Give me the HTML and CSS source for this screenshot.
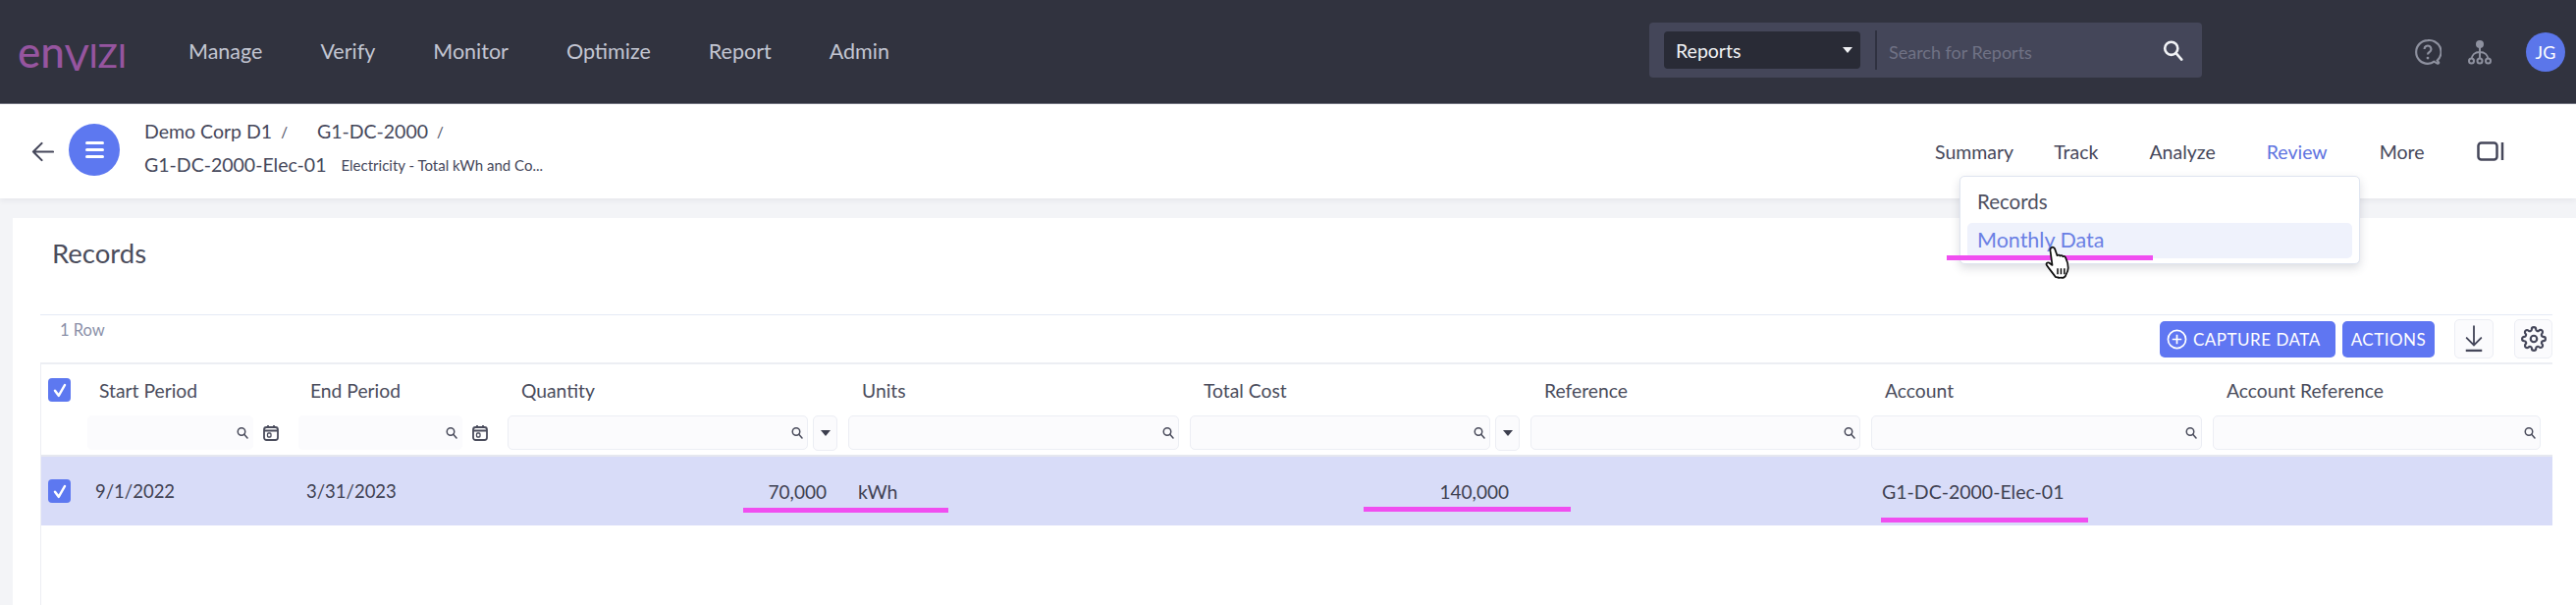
FILE: index.html
```html
<!DOCTYPE html>
<html lang="en">
<head>
    <meta charset="UTF-8">
    <title>Envizi - Monthly Data</title>
    <link rel="stylesheet" href="styles.css">
</head>
<body>
    <svg class="defs" width="0" height="0">
        <symbol id="i-search" viewBox="0 0 24 24"><circle cx="10" cy="10" r="7.5" fill="none" stroke="currentColor" stroke-width="3"/><path d="M15.5 15.5 22 23" fill="none" stroke="currentColor" stroke-width="3" stroke-linecap="round"/></symbol>
        <symbol id="i-cal" viewBox="0 0 16 16"><rect x="1" y="2" width="14" height="13" rx="2.5" fill="none" stroke="currentColor" stroke-width="1.8"/><path d="M1 5.500h14M5 0v2.500M11 0v2.500" stroke="currentColor" stroke-width="1.800"/><rect x="4.500" y="8" width="3.500" height="4" rx="1" fill="none" stroke="currentColor" stroke-width="1.300"/></symbol>
        <symbol id="i-check" viewBox="0 0 24 24"><path d="M6 13l4.5 6L18 6" fill="none" stroke="#fff" stroke-width="3" stroke-linecap="round" stroke-linejoin="round"/></symbol>
    </svg>

    <!-- Top navigation -->
    <header class="topbar">
        <div class="logo"><span class="logo-low">en</span><span class="logo-v">V</span><span class="logo-cap">IZI</span></div>
        <nav class="main-nav">
            <a href="#">Manage</a>
            <a href="#">Verify</a>
            <a href="#">Monitor</a>
            <a href="#">Optimize</a>
            <a href="#">Report</a>
            <a href="#">Admin</a>
        </nav>
        <div class="search-box">
            <div class="search-select">
                <span>Reports</span>
                <span class="caret caret-light"></span>
            </div>
            <div class="search-field">
                <span class="placeholder">Search for Reports</span>
                <svg class="search-icon"><use href="#i-search"/></svg>
            </div>
        </div>
        <div class="top-icons">
            <svg class="help-icon" viewBox="0 0 26 26">
                <path d="M13 2a11 11 0 1 0 0 22c2.4 0 4.5-.8 6-2l3 1.800c1.300.4 1.800-.8 1-1.600l-1-1.200A11 11 0 0 0 13 2z" fill="none" stroke="currentColor" stroke-width="2"/>
                <path d="M9.800 10.200a3.200 3.200 0 1 1 4.800 2.800c-1 .6-1.600 1.100-1.600 2.400" fill="none" stroke="currentColor" stroke-width="2"/>
                <circle cx="13" cy="18.600" r="1.300" fill="currentColor"/>
            </svg>
            <svg class="tree-icon" viewBox="0 0 26 26">
                <circle cx="13" cy="5" r="4" fill="currentColor"/>
                <path d="M13 8v14M13 13c-5 0-8.500 3-8.500 8M13 13c5 0 8.500 3 8.500 8" fill="none" stroke="currentColor" stroke-width="2"/>
                <circle cx="4.500" cy="22" r="2.500" fill="#31333f" stroke="currentColor" stroke-width="2"/>
                <circle cx="13" cy="22" r="2.500" fill="#31333f" stroke="currentColor" stroke-width="2"/>
                <circle cx="21.500" cy="22" r="2.500" fill="#31333f" stroke="currentColor" stroke-width="2"/>
            </svg>
            <div class="avatar">JG</div>
        </div>
    </header>

    <!-- Breadcrumb and tabs -->
    <section class="subbar">
        <svg class="back-icon" viewBox="0 0 24 24"><path d="M23 12H2M11 3l-9 9 9 9" fill="none" stroke="currentColor" stroke-width="2.200" stroke-linecap="round" stroke-linejoin="round"/></svg>
        <button class="menu-btn"><span></span><span></span><span></span></button>
        <div class="crumbs">
            <div class="crumb-line">
                <span>Demo Corp D1</span><span class="slash">/</span>
                <span class="crumb-two">G1-DC-2000</span><span class="slash">/</span>
            </div>
            <div class="crumb-line">
                <span>G1-DC-2000-Elec-01</span>
                <span class="crumb-note">Electricity - Total kWh and Co...</span>
            </div>
        </div>
        <nav class="tabs">
            <a class="tab-summary" href="#">Summary</a>
            <a class="tab-track" href="#">Track</a>
            <a class="tab-analyze" href="#">Analyze</a>
            <a class="tab-review" href="#">Review</a>
            <a class="tab-more" href="#">More</a>
            <svg class="panel-icon" viewBox="0 0 28 20"><rect x="1.500" y="1.500" width="19" height="17" rx="3" fill="none" stroke="currentColor" stroke-width="2.500"/><path d="M26 1v18" stroke="currentColor" stroke-width="2.500"/></svg>
        </nav>
    </section>

    <main class="page">
        <div class="card">
            <h1 class="title">Records</h1>
            <div class="grid-wrap">
                <div class="grid-top">
                    <span class="row-count">1 Row</span>
                    <div class="toolbar">
                        <button class="btn btn-capture">
                            <svg class="plus-icon" viewBox="0 0 22 22"><circle cx="11" cy="11" r="9.500" fill="none" stroke="#fff" stroke-width="1.800"/><path d="M11 6v10M6 11h10" stroke="#fff" stroke-width="1.800"/></svg>
                            CAPTURE DATA
                        </button>
                        <button class="btn btn-actions">ACTIONS</button>
                        <button class="tool-btn tool-download">
                            <svg viewBox="0 0 24 30" class="tool-icon"><path d="M12 1v20M4 14l8 8 8-8" fill="none" stroke="currentColor" stroke-width="2" stroke-linecap="round"/><path d="M3 28h18" stroke="currentColor" stroke-width="2.500"/></svg>
                        </button>
                        <button class="tool-btn">
                            <svg viewBox="0 0 24 24" class="tool-icon gear"><circle cx="12" cy="12" r="3" fill="none" stroke="currentColor" stroke-width="2"/><path fill="none" stroke="currentColor" stroke-width="2" d="M19.400 15a1.650 1.650 0 0 0 .33 1.820l.06.06a2 2 0 0 1 0 2.830 2 2 0 0 1-2.830 0l-.06-.06a1.650 1.650 0 0 0-1.820-.33 1.650 1.650 0 0 0-1 1.510V21a2 2 0 0 1-2 2 2 2 0 0 1-2-2v-.09A1.650 1.650 0 0 0 9 19.400a1.650 1.650 0 0 0-1.820.33l-.06.06a2 2 0 0 1-2.830 0 2 2 0 0 1 0-2.830l.06-.06a1.650 1.650 0 0 0 .33-1.820 1.650 1.650 0 0 0-1.510-1H3a2 2 0 0 1-2-2 2 2 0 0 1 2-2h.09A1.650 1.650 0 0 0 4.600 9a1.650 1.650 0 0 0-.33-1.820l-.06-.06a2 2 0 0 1 0-2.830 2 2 0 0 1 2.830 0l.06.06a1.650 1.650 0 0 0 1.820.33H9a1.650 1.650 0 0 0 1-1.510V3a2 2 0 0 1 2-2 2 2 0 0 1 2 2v.09a1.650 1.650 0 0 0 1 1.510 1.650 1.650 0 0 0 1.820-.33l.06-.06a2 2 0 0 1 2.830 0 2 2 0 0 1 0 2.830l-.06.06a1.650 1.650 0 0 0-.33 1.820V9a1.650 1.650 0 0 0 1.510 1H21a2 2 0 0 1 2 2 2 2 0 0 1-2 2h-.09a1.650 1.650 0 0 0-1.510 1z"/></svg>
                        </button>
                    </div>
                </div>

                <div class="table">
                    <div class="cols head-row">
                        <div class="head-check"><span class="check"><svg><use href="#i-check"/></svg></span></div>
                        <div class="label label-date">Start Period</div>
                        <div class="label label-date">End Period</div>
                        <div class="label">Quantity</div>
                        <div class="label">Units</div>
                        <div class="label">Total Cost</div>
                        <div class="label">Reference</div>
                        <div class="label">Account</div>
                        <div class="label">Account Reference</div>
                    </div>
                    <div class="cols filter-row">
                        <div></div>
                        <div class="filter filter-date">
                            <div class="input input-plain"><svg class="mini-search"><use href="#i-search"/></svg></div>
                            <svg class="cal"><use href="#i-cal"/></svg>
                        </div>
                        <div class="filter filter-date">
                            <div class="input input-plain"><svg class="mini-search"><use href="#i-search"/></svg></div>
                            <svg class="cal"><use href="#i-cal"/></svg>
                        </div>
                        <div class="filter">
                            <div class="input"><svg class="mini-search"><use href="#i-search"/></svg></div>
                            <div class="mode-btn"><span class="caret"></span></div>
                        </div>
                        <div class="filter">
                            <div class="input"><svg class="mini-search"><use href="#i-search"/></svg></div>
                        </div>
                        <div class="filter">
                            <div class="input"><svg class="mini-search"><use href="#i-search"/></svg></div>
                            <div class="mode-btn"><span class="caret"></span></div>
                        </div>
                        <div class="filter">
                            <div class="input"><svg class="mini-search"><use href="#i-search"/></svg></div>
                        </div>
                        <div class="filter">
                            <div class="input"><svg class="mini-search"><use href="#i-search"/></svg></div>
                        </div>
                        <div class="filter">
                            <div class="input"><svg class="mini-search"><use href="#i-search"/></svg></div>
                        </div>
                    </div>
                    <div class="cols data-row">
                        <div class="head-check"><span class="check"><svg><use href="#i-check"/></svg></span></div>
                        <div class="cell cell-date">9/1/2022</div>
                        <div class="cell cell-date">3/31/2023</div>
                        <div class="cell cell-num">70,000</div>
                        <div class="cell cell-unit">kWh</div>
                        <div class="cell cell-num">140,000</div>
                        <div class="cell"></div>
                        <div class="cell cell-account">G1-DC-2000-Elec-01</div>
                        <div class="cell"></div>
                    </div>
                </div>
            </div>
        </div>
    </main>

    <!-- Review dropdown, lies over the page -->
    <div class="dropdown">
        <div class="drop-item">Records</div>
        <div class="drop-item drop-active">Monthly Data</div>
    </div>

    <!-- Hand drawn annotation marks from the screenshot -->
    <span class="mark mark-menu"></span>
    <span class="mark mark-qty"></span>
    <span class="mark mark-cost"></span>
    <span class="mark mark-account"></span>

    <svg class="hand" viewBox="0 0 32 36">
        <path d="M8 2.500c1.500-1.300 3.300-.8 4 1l2.500 7c1-.9 2.300-.7 3 .3 1-.7 2.400-.3 3 .7 1-.5 2.200 0 2.700 1 1.500 3 2.800 7 2.800 11 0 3-1 5-2.500 7.500-.3 2-3 3.200-5 2.500-1 .5-2.500.4-3.500-.2-1.500.2-2.800-.5-3.300-1.800-2.500-3.500-6-7.500-8.200-11-1-1.600.6-3.300 2.400-2.500l3.400 2.500L7.500 7c-.5-1.800-.5-3.500.5-4.500z" fill="#fff" stroke="#111" stroke-width="1.800" stroke-linejoin="round"/>
        <path d="M15 24v6M18.500 24v6M22 24v6" stroke="#111" stroke-width="1.600"/>
    </svg>
</body>
</html>
```

FILE: styles.css
```css
* {
    box-sizing: border-box;
}

html, body {
    margin: 0;
    height: 100%;
}

body {
    width: 2624px;
    height: 616px;
    overflow: hidden;
    position: relative;
    font-family: 'Lato', 'Open Sans', sans-serif;
    font-size: 18px;
    color: #45475a;
    background-color: #fff;
}

a {
    color: inherit;
    text-decoration: none;
}

button {
    font-family: inherit;
    border: none;
    padding: 0;
}

.defs {
    display: block;
    height: 0;
}

/* Top bar */
.topbar {
    height: 106px;
    display: flex;
    align-items: center;
    background-color: #31333f;
    border-bottom: 1px solid #70727e;
    padding-left: 18px;
}

.logo {
    width: 174px;
    color: #96559f;
    font-weight: 500;
    line-height: 1;
    white-space: nowrap;
}

.logo-low {
    font-size: 44px;
}

.logo-v {
    font-size: 36px;
    vertical-align: -3px;
}

.logo-cap {
    font-size: 33px;
}

.main-nav {
    display: flex;
    gap: 59px;
    width: 1488px;
    margin-top: -1px;
    font-size: 21.5px;
    color: #c3c6d2;
}

.search-box {
    width: 563px;
    height: 56px;
    margin-top: -3px;
    display: flex;
    align-items: center;
    padding-left: 15px;
    background-color: #444659;
    border-radius: 4px;
}

.search-select {
    width: 200px;
    height: 38px;
    display: flex;
    align-items: center;
    justify-content: space-between;
    padding: 0 8px 0 12px;
    background-color: #292b36;
    border-radius: 4px;
    color: #f1f2f5;
    font-size: 19.5px;
}

.caret {
    display: inline-block;
    width: 0;
    height: 0;
    border-left: 5px solid transparent;
    border-right: 5px solid transparent;
    border-top: 6px solid #3c3e4e;
}

.caret-light {
    border-top-color: #f1f2f5;
}

.search-field {
    flex: 1;
    height: 40px;
    margin-left: 15px;
    display: flex;
    align-items: center;
    justify-content: space-between;
    padding: 4px 19px 0 12px;
    border-left: 2px solid #2f3140;
}

.placeholder {
    color: #707285;
    font-size: 18px;
}

.search-icon {
    width: 21px;
    height: 24px;
    margin-top: -4px;
    color: #f1f2f5;
}

.top-icons {
    display: flex;
    align-items: center;
    margin-left: 216px;
}

.help-icon {
    width: 28px;
    height: 28px;
    color: #8e919f;
}

.tree-icon {
    width: 26px;
    height: 26px;
    margin-left: 26px;
    color: #8e919f;
}

.avatar {
    width: 40px;
    height: 40px;
    margin-left: 34px;
    border-radius: 50%;
    background-color: #5b76ea;
    color: #fff;
    font-size: 18px;
    display: flex;
    align-items: center;
    justify-content: center;
}

/* Breadcrumb row */
.subbar {
    height: 96px;
    display: flex;
    align-items: center;
    background-color: #fff;
    padding-left: 32px;
    box-shadow: 0 2px 6px rgba(60, 64, 90, 0.08);
    position: relative;
}

.back-icon {
    width: 23px;
    height: 23px;
    color: #45475a;
}

.menu-btn {
    width: 52px;
    height: 53px;
    margin-left: 15px;
    margin-top: -4px;
    border-radius: 50%;
    background-color: #5d78f0;
    display: flex;
    flex-direction: column;
    align-items: center;
    justify-content: center;
    gap: 4px;
}

.menu-btn span {
    width: 19px;
    height: 3px;
    border-radius: 2px;
    background-color: #fff;
}

.crumbs {
    width: 1824px;
    margin-left: 25px;
    margin-top: -7px;
    display: flex;
    flex-direction: column;
    gap: 14px;
}

.crumb-line {
    display: flex;
    align-items: center;
    height: 20px;
    font-size: 19.5px;
    white-space: nowrap;
}

.slash {
    margin-left: 9px;
    font-size: 15px;
}

.crumb-two {
    margin-left: 30px;
}

.crumb-note {
    margin-left: 15px;
    font-size: 15px;
}

.tabs {
    display: flex;
    align-items: center;
    font-size: 19.5px;
}

.tabs a {
    white-space: nowrap;
}

.tab-track { margin-left: 41px; }
.tab-analyze { margin-left: 52px; }
.tab-review { margin-left: 52px; color: #5f74e0; }
.tab-more { margin-left: 53px; }

.panel-icon {
    width: 28px;
    height: 20px;
    margin-left: 53px;
    color: #45475a;
}

/* Page body */
.page {
    height: 414px;
    background-color: #f3f4f7;
    padding: 20px 0 0 13px;
}

.card {
    height: 394px;
    background-color: #fff;
}

.title {
    margin: 0;
    height: 98px;
    padding: 19px 0 0 40px;
    font-size: 27.5px;
    font-weight: 400;
    line-height: 34px;
    color: #4b4d5c;
}

.grid-wrap {
    margin-left: 28px;
    width: 2559px;
}

.grid-top {
    height: 49px;
    display: flex;
    justify-content: space-between;
    border-top: 1px solid #e5eaf5;
}

.row-count {
    padding: 6px 0 0 20px;
    font-size: 16.5px;
    line-height: 18px;
    color: #8a90a8;
}

.toolbar {
    display: flex;
    align-items: flex-start;
    padding-top: 4px;
}

.btn {
    height: 37px;
    margin-top: 2px;
    border-radius: 5px;
    background-color: #5f76f2;
    color: #fff;
    font-size: 17px;
    letter-spacing: 0.5px;
    display: flex;
    align-items: center;
    white-space: nowrap;
}

.btn-capture {
    width: 179px;
    padding-left: 7px;
    gap: 6px;
}

.plus-icon {
    width: 21px;
    height: 21px;
}

.btn-actions {
    width: 94px;
    margin-left: 7px;
    justify-content: center;
}

.tool-btn {
    width: 39px;
    height: 40px;
    margin-left: 21px;
    background-color: #fbfbfd;
    border: 1px solid #eceef4;
    border-radius: 5px;
    color: #45475a;
    display: flex;
    align-items: center;
    justify-content: center;
}

.tool-download {
    width: 40px;
    margin-left: 20px;
}

.tool-icon {
    width: 22px;
    height: 28px;
}

.gear {
    width: 26px;
    height: 26px;
}

.table {
    height: 247px;
    border-top: 2px solid #eceef3;
    border-left: 1px solid #eceef3;
}

.cols {
    display: grid;
    grid-template-columns: 47px 215px 213px 347px 348px 347px 347px 348px 345px;
}

.head-row {
    height: 52px;
    align-items: center;
}

.head-check {
    padding-left: 7px;
    display: flex;
    align-items: center;
}

.check {
    width: 23px;
    height: 24px;
    border-radius: 4px;
    background-color: #5d78f0;
    display: flex;
    align-items: center;
    justify-content: center;
}

.check svg {
    width: 20px;
    height: 20px;
}

.label {
    padding-left: 14px;
    font-size: 19.3px;
    color: #4a4c5c;
    white-space: nowrap;
}

.label-date {
    padding-left: 12px;
}

.filter-row {
    height: 42px;
    border-bottom: 2px solid #e6e8ef;
}

.filter {
    height: 35px;
    display: flex;
    gap: 5px;
    padding-right: 11px;
}

.filter-date {
    padding-right: 46px;
    position: relative;
}

.input {
    flex: 1;
    height: 35px;
    display: flex;
    align-items: center;
    justify-content: flex-end;
    padding-right: 4px;
    background-color: #fbfbfd;
    border: 1px solid #eceef4;
    border-radius: 5px;
    color: #4a4c5c;
}

.input-plain {
    border-color: #fbfbfd;
}

.mini-search {
    width: 12px;
    height: 13px;
}

.cal {
    position: absolute;
    right: 20px;
    top: 10px;
    width: 16px;
    height: 16px;
    color: #4a4c5c;
}

.mode-btn {
    width: 25px;
    height: 36px;
    background-color: #fbfbfd;
    border: 1px solid #eceef4;
    border-radius: 5px;
    display: flex;
    align-items: center;
    justify-content: center;
}

.data-row {
    height: 70px;
    align-items: center;
    background-color: #d8dcf8;
}

.cell {
    font-size: 18.5px;
    color: #3f4152;
    white-space: nowrap;
}

.cell-date {
    padding-left: 8px;
}

.cell-num {
    font-size: 19px;
    text-align: right;
    padding-right: 22px;
}

.cell-unit {
    font-size: 19.5px;
    padding-left: 10px;
}

.cell-account {
    font-size: 19.5px;
    padding-left: 11px;
}

/* Dropdown over the page */
.dropdown {
    position: absolute;
    left: 1996px;
    top: 179px;
    width: 408px;
    height: 90px;
    padding: 2px 7px 7px;
    background-color: #fff;
    border: 1px solid #dfe5f0;
    border-radius: 5px;
    box-shadow: 0 4px 10px rgba(60, 64, 90, 0.18);
    font-size: 20.5px;
    color: #4e505f;
}

.drop-item {
    height: 45px;
    padding: 0 10px;
    display: flex;
    align-items: center;
}

.drop-active {
    height: 36px;
    padding-bottom: 3px;
    border-radius: 5px;
    background-color: #eff2fc;
    color: #6a80e4;
    font-size: 21.5px;
}

/* Annotation marks */
.mark {
    position: absolute;
    height: 5px;
    background-color: #f04ef0;
}

.mark-menu { left: 1983px; top: 260px; width: 210px; }
.mark-qty { left: 757px; top: 517px; width: 209px; }
.mark-cost { left: 1389px; top: 516px; width: 211px; }
.mark-account { left: 1916px; top: 527px; width: 211px; }

.hand {
    position: absolute;
    left: 2081px;
    top: 250px;
    width: 32px;
    height: 35px;
}
```
